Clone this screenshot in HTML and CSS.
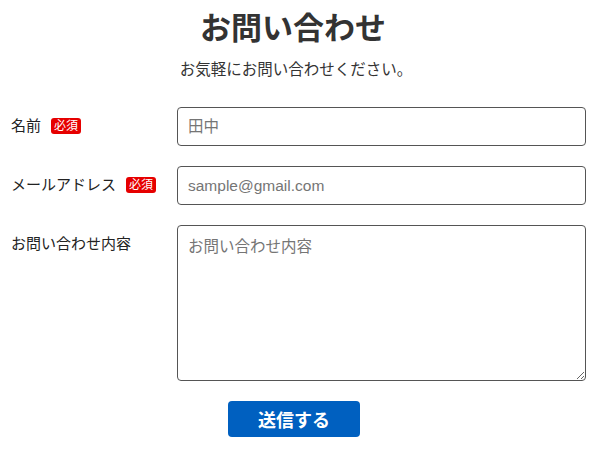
FILE: index.html
```html
<!DOCTYPE html>
<html lang="ja">
<head>
  <meta charset="UTF-8" />
  <meta name="viewport" content="width=device-width, initial-scale=1.0"/>
  <title>お問い合わせ</title>
  <link rel="stylesheet" href="styles.css">
</head>
<body>
  <div class="contact">
    <h1>お問い合わせ</h1>
    <p class="lead">お気軽にお問い合わせください。</p>

    <form class="contact-form" onsubmit="return false;">
      <div class="form-row">
        <label class="form-label" for="name">名前<span class="required">必須</span></label>
        <input class="form-input" type="text" id="name" placeholder="田中" />
      </div>
      <div class="form-row">
        <label class="form-label" for="email">メールアドレス<span class="required">必須</span></label>
        <input class="form-input" type="email" id="email" placeholder="sample@gmail.com" />
      </div>
      <div class="form-row">
        <label class="form-label" for="message">お問い合わせ内容</label>
        <textarea class="form-input form-textarea" id="message" placeholder="お問い合わせ内容"></textarea>
      </div>
      <div class="form-submit">
        <button class="submit-btn" type="submit">送信する</button>
      </div>
    </form>
  </div>
</body>
</html>
```

FILE: styles.css
```css
html, body {
  margin: 0;
  padding: 0;
  background: #fff;
  color: #333;
  font-family: "Liberation Sans", "Noto Sans CJK JP", sans-serif;
}

.contact {
  width: 586px;
}

h1 {
  margin: 0;
  padding-top: 7px;
  font-size: 31px;
  line-height: 44px;
  font-weight: bold;
  text-align: center;
  color: #333;
}

.lead {
  margin: 8px 0 0;
  padding-left: 6px;
  font-size: 15.5px;
  line-height: 22px;
  text-align: center;
}

.contact-form {
  margin-top: 26px;
  padding-left: 11px;
}

.form-row {
  display: flex;
  align-items: flex-start;
  margin-bottom: 20px;
}

.form-label {
  width: 166px;
  flex-shrink: 0;
  padding-top: 8px;
  font-size: 15px;
  line-height: 22px;
  color: #222;
}

.required {
  display: inline-block;
  margin-left: 10px;
  padding: 0 3px;
  background: #e60000;
  color: #fff;
  font-size: 12px;
  line-height: 16px;
  border-radius: 3px;
  vertical-align: 1px;
}

.form-input {
  flex: 1;
  height: 39px;
  box-sizing: border-box;
  padding: 0 10px;
  border: 1px solid #555;
  border-radius: 4px;
  font-family: "Liberation Sans", "Noto Sans CJK JP", sans-serif;
  font-size: 15.5px;
  color: #333;
  background: #fff;
}

.form-input::placeholder {
  color: #757575;
}

.form-textarea {
  height: 156px;
  padding: 10px;
  line-height: 22px;
  resize: vertical;
}

.form-submit {
  display: flex;
  justify-content: center;
  padding-right: 9px;
}

.submit-btn {
  width: 132px;
  height: 36px;
  border: none;
  border-radius: 4px;
  background: #0060c0;
  color: #fff;
  font-family: "Liberation Sans", "Noto Sans CJK JP", sans-serif;
  font-size: 18px;
  font-weight: bold;
  cursor: pointer;
}
```
